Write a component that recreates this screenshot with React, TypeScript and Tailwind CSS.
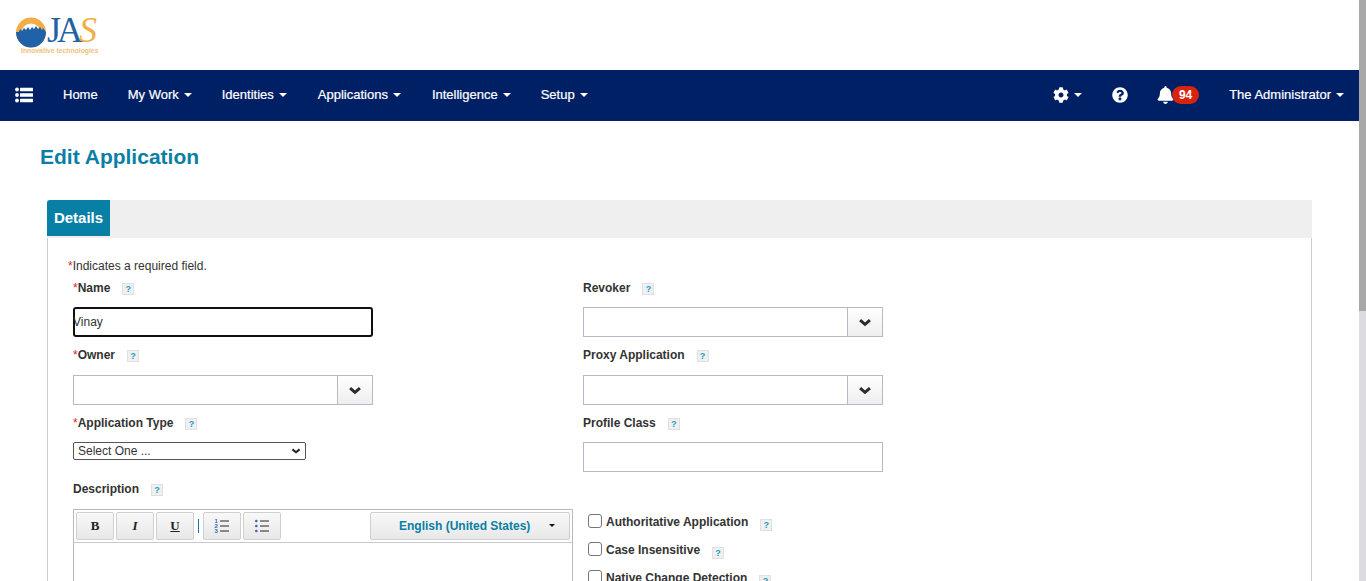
import React from "react";
import { FaCog, FaQuestionCircle, FaBell } from "react-icons/fa";

const Caret = () => (
  <span className="ml-[5px] inline-block w-0 h-0 border-x-[4px] border-x-transparent border-t-[4px] border-t-white align-middle" />
);

const NavItem = ({ label, caret = true, cls = "" }: { label: string; caret?: boolean; cls?: string }) => (
  <span className={"text-[13px] text-white flex items-center [-webkit-text-stroke:0.2px_white] " + cls}>
    {label}
    {caret && <Caret />}
  </span>
);

const Help = ({ cls = "" }: { cls?: string }) => (
  <span className={"inline-flex items-center justify-center w-[12px] h-[12px] bg-[#f0f0f0] border border-[#e0e0e0] text-[#1b9cc4] text-[9px] font-bold leading-none " + cls}>
    ?
  </span>
);

const Label = ({ text, req = false }: { text: string; req?: boolean }) => (
  <div className="h-[20px] flex items-center text-[12px] font-bold text-[#333]">
    {req && <span className="text-[#e0202a] font-normal">*</span>}
    <span>{text}</span>
    <Help cls="ml-[12px] mt-[2px]" />
  </div>
);

const Chevron = ({ w, h, sw, color }: { w: number; h: number; sw: number; color: string }) => (
  <svg width={w} height={h} viewBox={`0 0 ${w} ${h}`}>
    <polyline
      points={`${sw * 0.7},${sw * 0.7} ${w / 2},${h - sw * 0.9} ${w - sw * 0.7},${sw * 0.7}`}
      fill="none"
      stroke={color}
      strokeWidth={sw}
    />
  </svg>
);

const Combo = () => (
  <div className="flex w-[300px] h-[30px] border border-[#b8b8c8] bg-white">
    <div className="flex-1" />
    <div className="w-[35px] border-l border-[#b8b8c8] bg-gradient-to-b from-white to-[#eeeeee] flex items-center justify-center">
      <Chevron w={14} h={9} sw={3} color="#2b2b2b" />
    </div>
  </div>
);

const TBtn = ({ children, cls = "" }: { children: React.ReactNode; cls?: string }) => (
  <div className={"w-[38px] h-[28px] rounded-[2px] border border-[#cfcfcf] bg-gradient-to-b from-[#f8f8f8] to-[#e8e8e8] flex items-center justify-center " + cls}>
    {children}
  </div>
);

const ListIcon = ({ ordered }: { ordered: boolean }) => (
  <svg width="16" height="16" viewBox="0 0 16 16">
    {[3, 8, 13].map((y, i) =>
      ordered ? (
        <text key={y} x="0.5" y={y + 2} fontSize="6" fontWeight="700" fontFamily="Liberation Sans" fill="#3c62b0">
          {i + 1}
        </text>
      ) : (
        <circle key={y} cx="2.3" cy={y} r="1.3" fill="#3c62b0" />
      )
    )}
    {[3, 8, 13].map((y) => (
      <rect key={y} x="6" y={y - 0.5} width="9" height="1" fill="#222" />
    ))}
  </svg>
);

const Check = ({ text, mb }: { text: string; mb: string }) => (
  <div className={"flex items-center h-[16px] " + mb}>
    <span className="w-[14px] h-[14px] -mt-[2px] rounded-[3px] border border-[#767676] bg-white" />
    <span className="ml-[4px] text-[12px] font-bold text-[#333]">{text}</span>
    <Help cls="ml-[12px] mt-[6px]" />
  </div>
);

const Logo = () => (
  <div className="relative w-[84px] h-[46px] ml-[16px]">
    <svg width="30" height="31" viewBox="0 0 30 31" className="absolute left-0 top-[6px]">
      <circle cx="15" cy="15.5" r="15" fill="#f3ad45" />
      <circle cx="15" cy="16" r="9.5" fill="#ffffff" />
      <path
        d="M0 15 L3 15 L4 12 L6 14 L8 11 L10 13 L12 10 L14 13 L16 10 L18 12 L20 9 L22 12 L24 10 L26 13 L27 11 L30 15 A15 15.5 0 0 1 0 15 Z"
        fill="#1f62a8"
      />
    </svg>
    <span className="absolute left-[31px] top-[6px] text-[36px] leading-[26px] text-[#1f62a8] font-['Liberation_Serif',serif] tracking-[-4px] whitespace-nowrap">
      JA<span className="text-[#f3ad45] italic">S</span>
    </span>
    <span className="absolute left-[5px] top-[36px] text-[6.8px] leading-[8px] font-bold text-[#f3c27a] whitespace-nowrap font-['Liberation_Sans',sans-serif]">
      Innovative technologies
    </span>
  </div>
);

export default function App() {
  return (
    <div className="h-[581px] overflow-hidden flex bg-white font-['Liberation_Sans',Arial,sans-serif]">
      <div className="flex-1 min-w-0">
        <header className="h-[70px] pt-[11px] bg-white">
          <Logo />
        </header>
        <nav className="h-[51px] bg-[#002066] flex items-center text-white pl-[15px] pr-[15px] pb-[1px]">
          <svg width="18" height="16" viewBox="0 0 18 16" className="mr-[30px]">
            {[2.5, 8, 13.5].map((y) => (
              <g key={y} fill="#fff">
                <circle cx="2" cy={y} r="1.9" />
                <rect x="5" y={y - 1.8} width="13" height="3.6" rx="0.5" />
              </g>
            ))}
          </svg>
          <NavItem label="Home" caret={false} cls="mr-[30px]" />
          <NavItem label="My Work" cls="mr-[30px]" />
          <NavItem label="Identities" cls="mr-[31px]" />
          <NavItem label="Applications" cls="mr-[31px]" />
          <NavItem label="Intelligence" cls="mr-[30px]" />
          <NavItem label="Setup" />
          <div className="flex-1" />
          <span className="flex items-center mr-[30px]">
            <FaCog className="w-[16px] h-[16px]" />
            <Caret />
          </span>
          <FaQuestionCircle className="w-[16px] h-[16px] mr-[29px]" />
          <span className="flex items-center mr-[30px]">
            <FaBell className="w-[17px] h-[18px]" />
            <span className="ml-[-2px] h-[18px] w-[27px] rounded-full bg-[#d8240f] text-[12px] font-bold flex items-center justify-center">94</span>
          </span>
          <NavItem label="The Administrator" />
        </nav>
        <h1 className="ml-[40px] mt-[23px] h-[26px] text-[21px] leading-[26px] font-bold text-[#0a7fa5]">Edit Application</h1>
        <div className="ml-[47px] mr-[47px] mt-[30px]">
          <div className="h-[38px] bg-[#efefef]">
            <div className="w-[63px] h-[36px] bg-[#0880a5] rounded-tl-[3px] text-white text-[15px] font-bold flex items-center justify-center">
              Details
            </div>
          </div>
          <div className="border-x border-[#cccccc] px-[25px] pt-[20px] h-[400px] text-[#333]">
            <div className="h-[16px] text-[12px] leading-[16px] -ml-[5px] text-[#333]">
              <span className="text-[#e0202a]">*</span>Indicates a required field.
            </div>
            <div className="grid grid-cols-[510px_510px] mt-[4px]">
              <div>
                <Label text="Name" req />
                <div className="mt-[9px] w-[300px] h-[30px] rounded-[3px] border-2 border-[#101010] text-[12px] leading-[26px] text-[#333] indent-[-2px]">Vinay</div>
              </div>
              <div>
                <Label text="Revoker" />
                <div className="mt-[9px]"><Combo /></div>
              </div>
              <div className="mt-[8px]">
                <Label text="Owner" req />
                <div className="mt-[10px]"><Combo /></div>
              </div>
              <div className="mt-[8px]">
                <Label text="Proxy Application" />
                <div className="mt-[10px]"><Combo /></div>
              </div>
              <div className="mt-[8px]">
                <Label text="Application Type" req />
                <div className="mt-[9px] w-[233px] h-[18px] rounded-[2px] border border-[#555] flex items-center pl-[4px] pr-[4px] text-[12px] text-[#333]">
                  <span className="flex-1">Select One ...</span>
                  <Chevron w={10} h={6} sw={2} color="#222" />
                </div>
              </div>
              <div className="mt-[8px]">
                <Label text="Profile Class" />
                <div className="mt-[9px] w-[300px] h-[30px] border border-[#b8b8c8]" />
              </div>
              <div className="mt-[7px] col-span-2 flex">
                <div className="w-[510px]">
                  <Label text="Description" />
                  <div className="mt-[10px] w-[500px] h-[100px] border border-[#b8b8c8]">
                    <div className="h-[33px] border-b border-[#c8c8d0] flex items-center px-[2px] pb-[1px]">
                      <TBtn cls="mr-[2px]"><span className="font-['Liberation_Serif',serif] font-bold text-[13px] text-[#222]">B</span></TBtn>
                      <TBtn cls="mr-[2px]"><span className="font-['Liberation_Serif',serif] italic font-bold text-[13px] text-[#222]">I</span></TBtn>
                      <TBtn><span className="font-['Liberation_Serif',serif] underline font-bold text-[13px] text-[#222]">U</span></TBtn>
                      <span className="w-[1px] h-[14px] bg-[#0880a5] mx-[4px]" />
                      <TBtn cls="mr-[2px]"><ListIcon ordered /></TBtn>
                      <TBtn><ListIcon ordered={false} /></TBtn>
                      <div className="flex-1" />
                      <div className="w-[200px] h-[28px] rounded-[2px] border border-[#cfcfcf] bg-gradient-to-b from-[#f8f8f8] to-[#e8e8e8] flex items-center pl-[28px] pr-[14px]">
                        <span className="flex-1 text-[12px] font-bold text-[#0a7fa5] whitespace-nowrap">English (United States)</span>
                        <span className="w-0 h-0 border-x-[3px] border-x-transparent border-t-[3px] border-t-[#111]" />
                      </div>
                    </div>
                  </div>
                </div>
                <div className="pt-[35px] ml-[5px]">
                  <Check text="Authoritative Application" mb="mb-[12px]" />
                  <Check text="Case Insensitive" mb="mb-[12px]" />
                  <Check text="Native Change Detection" mb="" />
                </div>
              </div>
            </div>
          </div>
        </div>
      </div>
      <div className="w-[7px] bg-[#dcdce0] shrink-0">
        <div className="h-[311px] bg-[#a8a8a8]" />
      </div>
    </div>
  );
}
